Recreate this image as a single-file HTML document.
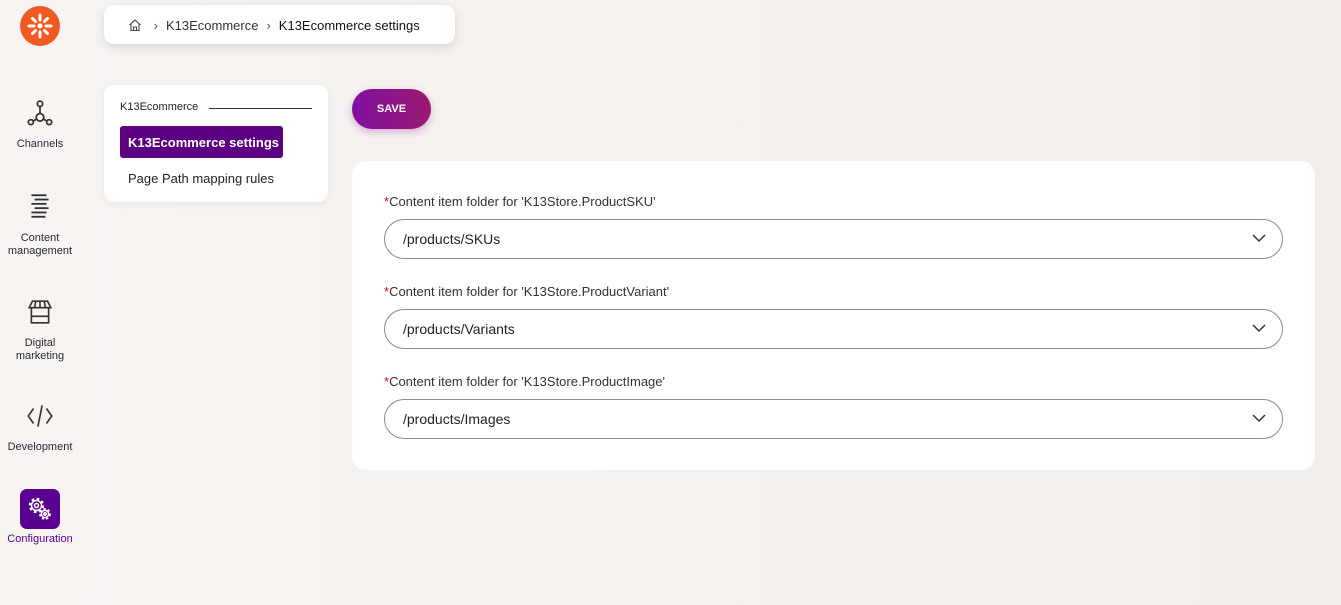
<!DOCTYPE html>
<html><head><style>
*{box-sizing:border-box;margin:0;padding:0}
body{width:1341px;height:605px;background:linear-gradient(90deg,#f7f4f2,#f2eeeb);font-family:"Liberation Sans",sans-serif;color:#1f1f2b;position:relative;overflow:hidden}
.abs{position:absolute}
.nav{width:80px;text-align:center;font-size:11px;color:#2a2a35;line-height:13px}
.nav svg{display:block;margin:0 auto}
.card{background:#fff;border-radius:10px}
.lbl{font-size:13px;color:#333}
.lbl b{color:#d00;font-weight:normal}
.sel{position:absolute;left:32px;width:899px;height:40px;border:1px solid #8a8a8a;border-radius:20px;font-size:14px;padding:11px 18px;color:#222}
.sel svg{position:absolute;right:16px;top:14px}
</style></head><body>
<div class="abs" style="left:20px;top:6px;width:40px;height:40px;border-radius:50%;background:#f05a22">
<svg width="40" height="40" viewBox="0 0 40 40"><g stroke="#fff" stroke-width="3" stroke-linecap="round"><line x1="20" y1="9" x2="20" y2="14"/><line x1="20" y1="26" x2="20" y2="31"/><line x1="9" y1="20" x2="14" y2="20"/><line x1="26" y1="20" x2="31" y2="20"/><line x1="12.5" y1="12.5" x2="15.5" y2="15.5"/><line x1="24.5" y1="24.5" x2="27.5" y2="27.5"/><line x1="27.5" y1="12.5" x2="24.5" y2="15.5"/><line x1="15.5" y1="24.5" x2="12.5" y2="27.5"/></g><circle cx="20" cy="20" r="2.5" fill="#fff"/></svg></div>

<div class="abs nav" style="left:0;top:99px"><svg width="28" height="28" viewBox="0 0 26 26" fill="none" stroke="#333" stroke-width="1.6"><circle cx="13" cy="4.5" r="2.5"/><circle cx="4.5" cy="21.5" r="2.3"/><circle cx="21.5" cy="21.5" r="2.3"/><circle cx="13" cy="17" r="3.5"/><line x1="13" y1="7" x2="13" y2="13.5"/><line x1="6.5" y1="20.5" x2="10" y2="18.5"/><line x1="19.5" y1="20.5" x2="16" y2="18.5"/></svg><div style="margin-top:11px">Channels</div></div>
<div class="abs nav" style="left:0;top:192px"><svg width="28" height="28" viewBox="0 0 26 26" stroke="#333" stroke-width="1.7"><line x1="5" y1="3" x2="19" y2="3"/><line x1="8" y1="7" x2="21" y2="7"/><line x1="5" y1="11" x2="19" y2="11"/><line x1="8" y1="15" x2="21" y2="15"/><line x1="5" y1="19" x2="19" y2="19"/><line x1="5" y1="23" x2="18" y2="23"/></svg><div style="margin-top:12px">Content<br>management</div></div>
<div class="abs nav" style="left:0;top:298px"><svg width="28" height="28" viewBox="0 0 26 26" fill="none" stroke="#333" stroke-width="1.5"><path d="M6 3h14l3 6H3z M3 9h20 M5 9v14h16V9 M9 3l-1 6 M17 3l1 6 M13 3v6 M5 17h16"/></svg><div style="margin-top:11px">Digital<br>marketing</div></div>
<div class="abs nav" style="left:0;top:402px"><svg width="30" height="28" viewBox="0 0 28 26" fill="none" stroke="#333" stroke-width="1.5"><path d="M8 6l-5 7 5 7M20 6l5 7-5 7M16 3l-4 20"/></svg><div style="margin-top:11px">Development</div></div>
<div class="abs" style="left:20px;top:489px;width:40px;height:40px;border-radius:7px;background:#5a0090"><svg width="40" height="40" viewBox="0 0 40 40" fill="none" stroke="#fff" stroke-width="1.5"><circle cx="16.5" cy="16.5" r="6.5" stroke-width="2.5" stroke-dasharray="2.6 2.5"/><circle cx="16.5" cy="16.5" r="5"/><circle cx="16.5" cy="16.5" r="2"/><circle cx="25" cy="25" r="4.8" stroke-width="2.2" stroke-dasharray="2.2 2"/><circle cx="25" cy="25" r="3.6"/><circle cx="25" cy="25" r="1.2"/></svg></div>
<div class="abs nav" style="left:0;top:533px;color:#5a0090">Configuration</div>

<div class="abs card" style="left:104px;top:5px;width:351px;height:39px;box-shadow:0 3px 10px rgba(0,0,0,.12);font-size:13px;padding:13px 0 0 24px">
<svg width="14" height="14" viewBox="0 0 14 14" fill="none" stroke="#444" stroke-width="1.1" style="vertical-align:-2px"><path d="M1.5 7L7 2l5.5 5M3 6v6.5h8V6M5.5 12.5V9h3v3.5"/></svg>
<span style="margin:0 8px;color:#555">›</span><span style="color:#333">K13Ecommerce</span><span style="margin:0 8px;color:#555">›</span><span style="color:#111">K13Ecommerce settings</span></div>

<div class="abs card" style="left:104px;top:85px;width:224px;height:117px;box-shadow:0 2px 8px rgba(0,0,0,.05)">
<div class="abs" style="left:16px;top:16px;font-size:11px;color:#222">K13Ecommerce</div>
<div class="abs" style="left:105px;top:23px;width:103px;height:1px;background:#333"></div>
<div class="abs" style="left:16px;top:41px;width:163px;height:32px;background:#5a0080;border-radius:3px;color:#fff;font-size:13px;font-weight:bold;padding:9px 0 0 8px">K13Ecommerce settings</div>
<div class="abs" style="left:24px;top:86px;font-size:13px;color:#222">Page Path mapping rules</div></div>

<div class="abs" style="left:352px;top:89px;width:79px;height:40px;border-radius:20px;background:linear-gradient(90deg,#8010a0,#9a1a70);color:#fff;font-size:11px;font-weight:bold;text-align:center;line-height:40px;box-shadow:0 3px 8px rgba(140,20,140,.3)">SAVE</div>

<div class="abs card" style="left:352px;top:161px;width:963px;height:309px;border-radius:14px">
<div class="abs lbl" style="left:32px;top:33px"><b>*</b>Content item folder for 'K13Store.ProductSKU'</div>
<div class="sel" style="top:58px">/products/SKUs<svg width="14" height="9" viewBox="0 0 14 9" fill="none" stroke="#333" stroke-width="1.5"><path d="M1 1l6 6 6-6"/></svg></div>
<div class="abs lbl" style="left:32px;top:123px"><b>*</b>Content item folder for 'K13Store.ProductVariant'</div>
<div class="sel" style="top:148px">/products/Variants<svg width="14" height="9" viewBox="0 0 14 9" fill="none" stroke="#333" stroke-width="1.5"><path d="M1 1l6 6 6-6"/></svg></div>
<div class="abs lbl" style="left:32px;top:213px"><b>*</b>Content item folder for 'K13Store.ProductImage'</div>
<div class="sel" style="top:238px">/products/Images<svg width="14" height="9" viewBox="0 0 14 9" fill="none" stroke="#333" stroke-width="1.5"><path d="M1 1l6 6 6-6"/></svg></div>
</div>
</body></html>
